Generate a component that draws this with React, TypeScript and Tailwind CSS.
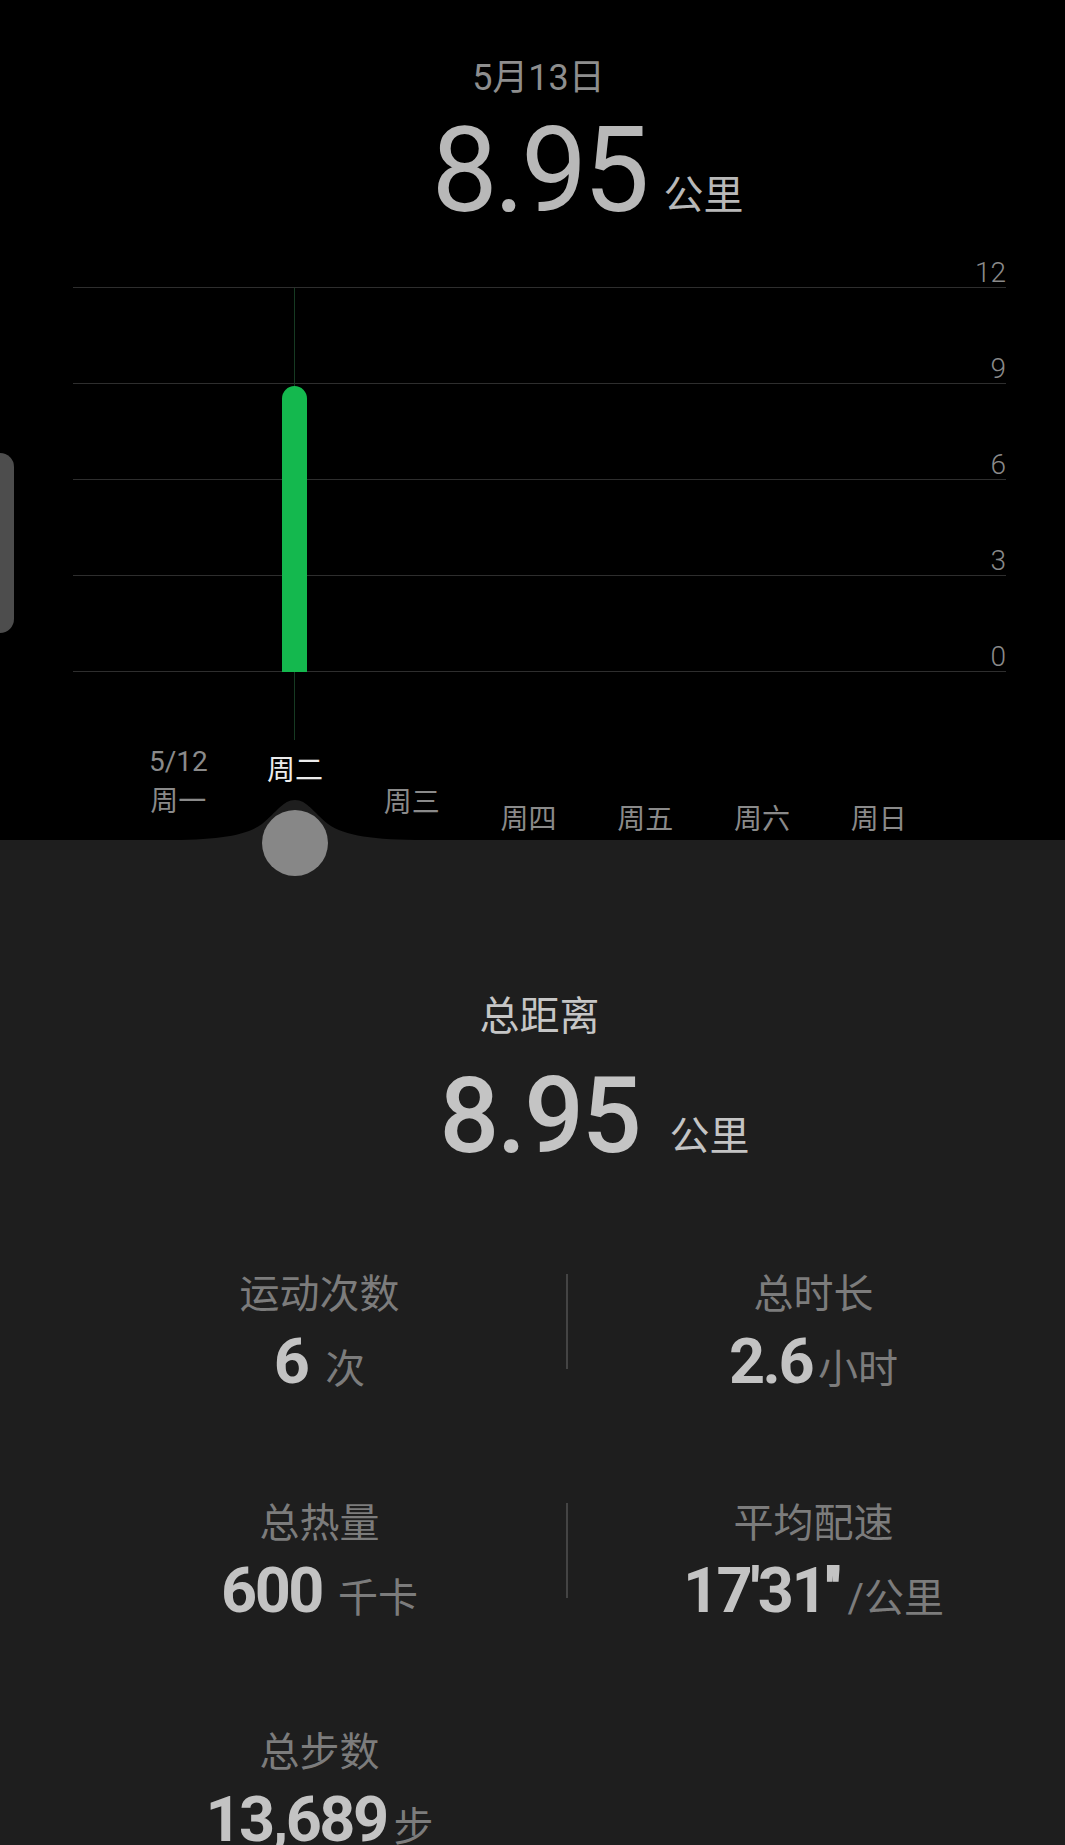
import React from 'react';

const FONT = "font-['Roboto','Noto_Sans_CJK_SC',sans-serif]";

const axis = [12, 9, 6, 3, 0];

const days = [
  { label: '周一', sub: '5/12', pad: 'pt-[76px]', active: false },
  { label: '周二', pad: 'pt-[85px]', active: true },
  { label: '周三', pad: 'pt-[117px]', active: false },
  { label: '周四', pad: 'pt-[134px]', active: false },
  { label: '周五', pad: 'pt-[134px]', active: false },
  { label: '周六', pad: 'pt-[134px]', active: false },
  { label: '周日', pad: 'pt-[134px]', active: false },
];

const distance = 8.95;
const maxKm = 12;
const chartHeight = 384;

type Stat = { label: string; value: string; unit: string; gap: string };

const rows: [Stat, Stat | null][] = [
  [
    { label: '运动次数', value: '6', unit: '次', gap: 'ml-[18px]' },
    { label: '总时长', value: '2.6', unit: '小时', gap: 'ml-[6px]' },
  ],
  [
    { label: '总热量', value: '600', unit: '千卡', gap: 'ml-[16px]' },
    { label: '平均配速', value: "17'31''", unit: '/公里', gap: 'ml-[9px]' },
  ],
  [{ label: '总步数', value: '13,689', unit: '步', gap: 'ml-[7px]' }, null],
];

const StatCell = ({ stat, width }: { stat: Stat | null; width: string }) => (
  <div className={`flex flex-col items-center ${width}`}>
    {stat && (
      <>
        <div className="text-[40px] leading-[40px] text-[#7c7c7c]">{stat.label}</div>
        <div className="mt-[15px] flex items-baseline">
          <span className="text-[63px] leading-[63px] font-bold text-[#c3c3c3] tracking-[-2.5px]">
            {stat.value}
          </span>
          <span className={`text-[40px] leading-[40px] text-[#7c7c7c] ${stat.gap}`}>{stat.unit}</span>
        </div>
      </>
    )}
  </div>
);

export default function App() {
  return (
    <div className={`relative h-[1845px] w-[1065px] overflow-hidden bg-[#1e1e1e] ${FONT}`}>
      {/* top: daily chart */}
      <div className="relative h-[840px] bg-black">
        <div className="pt-[58px] pl-[12px] text-center text-[36px] leading-[40px] text-[#8e8e8e]">5月13日</div>
        <div className="mt-[14px] flex justify-center pl-[12px]">
          <span className="text-[118px] leading-[118px] tracking-[-4px] text-[#b8b8b8]">8.95</span>
          <span className="flex w-0 items-end whitespace-nowrap pb-[14px]">
            <span className="ml-[18px] text-[40px] leading-[40px] text-[#b8b8b8]">公里</span>
          </span>
        </div>

        <div className="relative mt-[25px] ml-[73px] w-[933px]">
          {axis.map((v, i) => (
            <div key={v} className={`flex flex-col justify-end ${i === 0 ? 'h-[33px]' : 'h-[96px]'}`}>
              <div className="text-right text-[28px] leading-[28px] font-light text-[#8a8a8a]">{v}</div>
              <div className="h-px bg-[#2e2e2e]" />
            </div>
          ))}
          <div className="absolute left-[221px] top-[33px] bottom-[-68px] w-px bg-[#163a22]" />
          <div
            className="absolute bottom-0 left-[209px] w-[25px] rounded-t-full bg-[#14b84e]"
            style={{ height: (distance / maxKm) * chartHeight }}
          />
        </div>

        <div className="ml-[120px] grid w-[817px] grid-cols-7">
          {days.map((d) => (
            <div key={d.label} className={`flex flex-col items-center ${d.pad}`}>
              {d.sub && (
                <div className="mb-[12px] text-[28px] leading-[28px] text-[#8a8a8a]">{d.sub}</div>
              )}
              <div
                className={`text-[28px] leading-[28px] ${d.active ? 'text-[#ececec]' : 'text-[#8a8a8a]'}`}
              >
                {d.label}
              </div>
            </div>
          ))}
        </div>

        <svg className="absolute bottom-0 left-[165px]" width="260" height="42" viewBox="0 0 260 42">
          <path
            d="M0 42 C52 42 80 38 97 26 C112 14 118 2 130 2 C142 2 148 14 163 26 C180 38 208 42 260 42 Z"
            fill="#1e1e1e"
          />
        </svg>

        <div className="absolute left-0 top-[453px] h-[180px] w-[14px] rounded-r-[14px] bg-[#4d4d4d]" />
      </div>

      <div className="absolute left-[262px] top-[810px] h-[66px] w-[66px] rounded-full bg-[#878787]" />

      {/* bottom: summary */}
      <div className="pt-[157px]">
        <div className="pl-[14px] text-center text-[40px] leading-[40px] text-[#c6c6c6]">总距离</div>
        <div className="mt-[27px] flex justify-center pl-[14px]">
          <span className="text-[105px] leading-[105px] font-medium tracking-[-2px] text-[#c4c4c4]">8.95</span>
          <span className="flex w-0 items-end whitespace-nowrap pb-[12px]">
            <span className="ml-[30px] text-[40px] leading-[40px] text-[#c4c4c4]">公里</span>
          </span>
        </div>

        <div className="mt-[106px] ml-[73px] flex w-[986px] flex-col">
          {rows.map(([l, r], i) => (
            <div key={i} className="flex h-[229px] items-start">
              <StatCell stat={l} width="w-[493px]" />
              {r && <div className="mt-[-1px] h-[95px] w-[2px] bg-[#444444]" />}
              <StatCell stat={r} width="w-[491px]" />
            </div>
          ))}
        </div>
      </div>
    </div>
  );
}
